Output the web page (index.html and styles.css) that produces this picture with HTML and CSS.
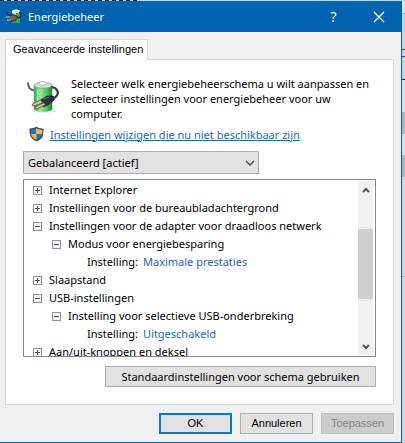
FILE: index.html
```html
<!DOCTYPE html>
<html lang="nl">
<head>
  <meta charset="UTF-8" />
  <meta name="viewport" content="width=device-width, initial-scale=1" />
  <title>Energiebeheer</title>
  <link rel="stylesheet" href="styles.css">
</head>
<body>
  <svg class="symbols" aria-hidden="true">
    <symbol id="battery" viewBox="0 0 34 34">
      <defs>
        <linearGradient id="cell" x1="0" x2="1" y1="0" y2="0">
          <stop offset="0" stop-color="#2fa544" />
          <stop offset="0.35" stop-color="#96ea99" />
          <stop offset="0.7" stop-color="#46c859" />
          <stop offset="1" stop-color="#1f8534" />
        </linearGradient>
      </defs>
      <ellipse cx="18" cy="31" rx="13" ry="2" fill="#dde2dd" />
      <path d="M1 2c0 5 2 8 7 8" fill="none" stroke="#58616c" stroke-width="2" />
      <path d="M7 5v24c0 4 19 4 19 0V5z" fill="url(#cell)" />
      <ellipse cx="16.5" cy="5" rx="9.5" ry="3" fill="#d4ded7" stroke="#829088" stroke-width="0.7" />
      <ellipse cx="16.5" cy="3" rx="4" ry="2" fill="#f8faf8" stroke="#94a099" stroke-width="0.7" />
      <path d="M11 9v14" stroke="#c7f8c7" stroke-width="1.5" opacity="0.7" />
      <path d="M25 7c6 0 8 5 6 8c-1 3-4 3-6 4" fill="none" stroke="#343b48" stroke-width="2.2" />
      <path d="M14 20l7-4 6 0 1 4-6 5-5 2z" fill="#2e323b" stroke="#151820" stroke-width="0.7" />
      <path d="M14 20l-8 4-1 2 3 0 8-3zM17 23l-8 4-1 2 3 0 8-4z" fill="#d7c198" stroke="#554839" stroke-width="0.8" />
      <path d="M17 19l6-2" stroke="#747b87" stroke-width="1" />
    </symbol>
  </svg>

  <div class="behind-top"></div>
  <div class="desktop">
    <main class="dialog">
      <header class="titlebar">
        <svg class="app-icon" viewBox="0 0 16 16" aria-hidden="true">
          <path d="M6 2h8v12H6z" fill="#38ad4b" />
          <path d="M7 3h3v9H7z" fill="#a0eba1" />
          <path d="M6 2c1-2 7-2 8 0v2H6z" fill="#f0f5ef" />
          <path d="M1 3c0 3 2 3 4 4M13 3c3 2 3 5-1 6" fill="none" stroke="#242b30" stroke-width="1.2" />
          <path d="M4 6h5l3 2-3 4H4L3 9z" fill="#6d6361" stroke="#20282c" />
          <path d="M0 8h4M1 11h4" stroke="#d1c8b5" />
        </svg>
        <h1 class="title">Energiebeheer</h1>
        <button class="caption-button" type="button" aria-label="Help">?</button>
        <button class="caption-button" type="button" aria-label="Sluiten">
          <svg width="12" height="12" viewBox="0 0 12 12"><path d="M1 1l10 10M11 1L1 11" stroke="#fff" stroke-width="1.3" /></svg>
        </button>
      </header>

      <div class="content">
        <div class="tabs" role="tablist">
          <button class="tab" type="button" role="tab" aria-selected="true">Geavanceerde instellingen</button>
        </div>

        <section class="panel">
          <div class="intro">
            <svg class="battery" aria-hidden="true"><use href="#battery" /></svg>
            <p>Selecteer welk energiebeheerschema u wilt aanpassen en selecteer instellingen voor energiebeheer voor uw computer.</p>
          </div>
          <div class="admin">
            <svg class="shield" viewBox="0 0 16 16" aria-hidden="true">
              <path d="M8 0C6 2 3 2 1 2c0 7 1 11 7 14V0z" fill="#2374bd" />
              <path d="M8 0c2 2 5 2 7 2 0 7-1 11-7 14V0z" fill="#f7bd35" />
              <path d="M1 8h7v8C3 14 1 12 1 8z" fill="#f7bd35" />
              <path d="M8 8h7c0 4-2 6-7 8z" fill="#2374bd" />
              <path d="M8 1C6 3 3 3 1 3c0 6 1 9 7 12 6-3 7-6 7-12-2 0-5 0-7-2z" fill="none" stroke="#3b4d5d" stroke-width="1.2" />
            </svg>
            <a href="#">Instellingen wijzigen die nu niet beschikbaar zijn</a>
          </div>

          <div class="scheme">
            <select aria-label="Energiebeheerschema">
              <option>Gebalanceerd [actief]</option>
            </select>
            <svg class="chevron" width="10" height="6" viewBox="0 0 10 6" aria-hidden="true"><path d="M1 1l4 4 4-4" fill="none" stroke="#404040" stroke-width="1.3" /></svg>
          </div>

          <div class="tree-box">
            <ul class="tree">
              <li><div class="row"><button class="toggle plus" type="button" aria-label="Uitvouwen"></button>Internet Explorer</div></li>
              <li><div class="row"><button class="toggle plus" type="button" aria-label="Uitvouwen"></button>Instellingen voor de bureaubladachtergrond</div></li>
              <li>
                <div class="row"><button class="toggle" type="button" aria-label="Samenvouwen"></button>Instellingen voor de adapter voor draadloos netwerk</div>
                <ul>
                  <li>
                    <div class="row"><button class="toggle" type="button" aria-label="Samenvouwen"></button>Modus voor energiebesparing</div>
                    <div class="row setting">Instelling: <a href="#">Maximale prestaties</a></div>
                  </li>
                </ul>
              </li>
              <li><div class="row"><button class="toggle plus" type="button" aria-label="Uitvouwen"></button>Slaapstand</div></li>
              <li>
                <div class="row"><button class="toggle" type="button" aria-label="Samenvouwen"></button>USB-instellingen</div>
                <ul>
                  <li>
                    <div class="row"><button class="toggle" type="button" aria-label="Samenvouwen"></button>Instelling voor selectieve USB-onderbreking</div>
                    <div class="row setting">Instelling: <a href="#">Uitgeschakeld</a></div>
                  </li>
                </ul>
              </li>
              <li><div class="row"><button class="toggle plus" type="button" aria-label="Uitvouwen"></button>Aan/uit-knoppen en deksel</div></li>
            </ul>
            <div class="scrollbar">
              <button type="button" aria-label="Omhoog"><svg width="8" height="6" viewBox="0 0 8 6"><path d="M1 5l3-3 3 3" fill="none" stroke="#555" stroke-width="2" /></svg></button>
              <div class="track"><div class="thumb"></div></div>
              <button type="button" aria-label="Omlaag"><svg width="8" height="6" viewBox="0 0 8 6"><path d="M1 1l3 3 3-3" fill="none" stroke="#555" stroke-width="2" /></svg></button>
            </div>
          </div>

          <button class="button defaults" type="button">Standaardinstellingen voor schema gebruiken</button>
        </section>

        <footer class="actions">
          <button class="button primary" type="button">OK</button>
          <button class="button" type="button">Annuleren</button>
          <button class="button" type="button" disabled>Toepassen</button>
        </footer>
      </div>
    </main>
    <div class="behind-side"></div>
  </div>
</body>
</html>
```
FILE: styles.css
```css
* {
  box-sizing: border-box;
}
body {
  display: flex;
  flex-direction: column;
  min-height: 100vh;
  margin: 0;
  font-family: "Noto Sans", "Open Sans", sans-serif;
  font-size: 11px;
  line-height: 15px;
  color: #000;
}
button, select {
  font: inherit;
  color: inherit;
  margin: 0;
  padding: 0;
  border-radius: 0;
}
a {
  color: #1a66c4;
}
ul {
  list-style: none;
  margin: 0;
  padding: 0;
}
.symbols {
  position: absolute;
  width: 0;
  height: 0;
}
/* edges of the window behind the dialog */
.behind-top {
  height: 1px;
  background: repeating-linear-gradient(to right, #1c2c3c 0 4px, #a9d3ea 4px 7px) left / 140px 1px no-repeat, #b4dcee;
}
.behind-side {
  width: 3px;
  background: linear-gradient(#e4e4e6 0 12px, #aaaaaa 12px 13px, #cfcfd1 13px 48px, #2b4a94 48px 49px, #d3c9de 49px 55px, #2b4a94 55px 56px, #c3d4e6 56px 78px, #222222 78px 79px, #dcdcdc 79px 111px, #b4b4b4 111px 133px, #dcdcdc 133px 154px, #b4b4b4 154px 176px, #d6d4d3 176px 275px, #aaaaaa 275px 276px, #d6d4d3 276px);
}
.desktop {
  display: flex;
  flex: 1;
}
.dialog {
  flex: 1;
  min-width: 0;
  display: flex;
  flex-direction: column;
  background: #f0f0f0;
  border-right: 1px solid #0063b1;
  border-bottom: 1px solid #0063b1;
}
.titlebar {
  display: flex;
  align-items: center;
  height: 31px;
  padding-left: 6px;
  background: #0063b1;
  color: #fff;
}
.app-icon {
  width: 16px;
  height: 16px;
}
.title {
  flex: 1;
  margin: 0 0 0 6px;
  font-size: 11px;
  font-weight: 400;
}
.caption-button {
  width: 45px;
  height: 30px;
  background: none;
  border: 0;
  font-size: 14px;
}
.caption-button svg {
  display: block;
  margin: auto;
}
.content {
  flex: 1;
  padding: 7px 7px 8px 5px;
}
.tabs {
  display: flex;
}
.tab {
  height: 21px;
  margin-bottom: -1px;
  padding: 0 4px 2px 7px;
  background: #fff;
  border: 1px solid #d9d9d9;
  border-bottom: 0;
  font-family: "Liberation Sans", sans-serif;
  z-index: 1;
}
.panel {
  display: flex;
  flex-direction: column;
  padding: 16px 17px 17px;
  background: #fff;
  border: 1px solid #d9d9d9;
}
.intro {
  display: flex;
  gap: 11px;
  padding-left: 4px;
}
.intro p {
  margin: 0;
}
.battery {
  flex: none;
  width: 33px;
  height: 34px;
  margin-top: 4px;
}
.admin {
  display: flex;
  align-items: center;
  gap: 6px;
  margin-top: 5px;
  padding-left: 6px;
}
.shield {
  width: 15px;
  height: 16px;
}
.scheme {
  position: relative;
  width: 236px;
  margin-top: 9px;
}
.scheme select {
  display: block;
  width: 100%;
  height: 23px;
  padding: 0 24px 0 4px;
  appearance: none;
  background: #e1e1e1;
  border: 1px solid #adadad;
}
.chevron {
  position: absolute;
  top: 9px;
  right: 4px;
  pointer-events: none;
}
.tree-box {
  display: flex;
  height: 178px;
  margin-top: 5px;
  padding: 0 1px;
  border: 1px solid #828790;
}
.tree {
  flex: 1;
  overflow: hidden;
  padding-left: 8px;
}
.tree ul {
  padding-left: 19px;
}
.row {
  display: flex;
  align-items: center;
  gap: 7px;
  height: 18px;
  white-space: nowrap;
}
.setting {
  gap: 5px;
  padding-left: 35px;
}
.setting a {
  text-decoration: none;
}
.toggle {
  width: 9px;
  height: 9px;
  margin-top: 2px;
  background: linear-gradient(#3b4f81, #3b4f81) center / 5px 1px no-repeat, #f5f5f5;
  border: 1px solid #919191;
}
.toggle.plus {
  background: linear-gradient(#3b4f81, #3b4f81) center / 5px 1px no-repeat, linear-gradient(#3b4f81, #3b4f81) center / 1px 5px no-repeat, #f5f5f5;
}
.scrollbar {
  display: flex;
  flex-direction: column;
  width: 15px;
  margin: 1px;
  background: #f0f0f0;
}
.scrollbar button {
  height: 17px;
  background: none;
  border: 0;
}
.scrollbar svg {
  display: block;
  margin: auto;
}
.track {
  flex: 1;
  padding-top: 31px;
}
.thumb {
  height: 70px;
  background: #cdcdcd;
}
.button {
  height: 21px;
  background: #e1e1e1;
  border: 1px solid #adadad;
}
.defaults {
  align-self: flex-end;
  width: 271px;
  margin-top: 9px;
}
.actions {
  display: flex;
  justify-content: flex-end;
  gap: 8px;
  margin-top: 8px;
}
.actions .button {
  width: 73px;
  font-family: "Liberation Sans", sans-serif;
}
.actions .primary {
  border: 2px solid #0078d7;
}
.actions .button:disabled {
  background: #cccccc;
  border-color: #bfbfbf;
  color: #838383;
}
```
